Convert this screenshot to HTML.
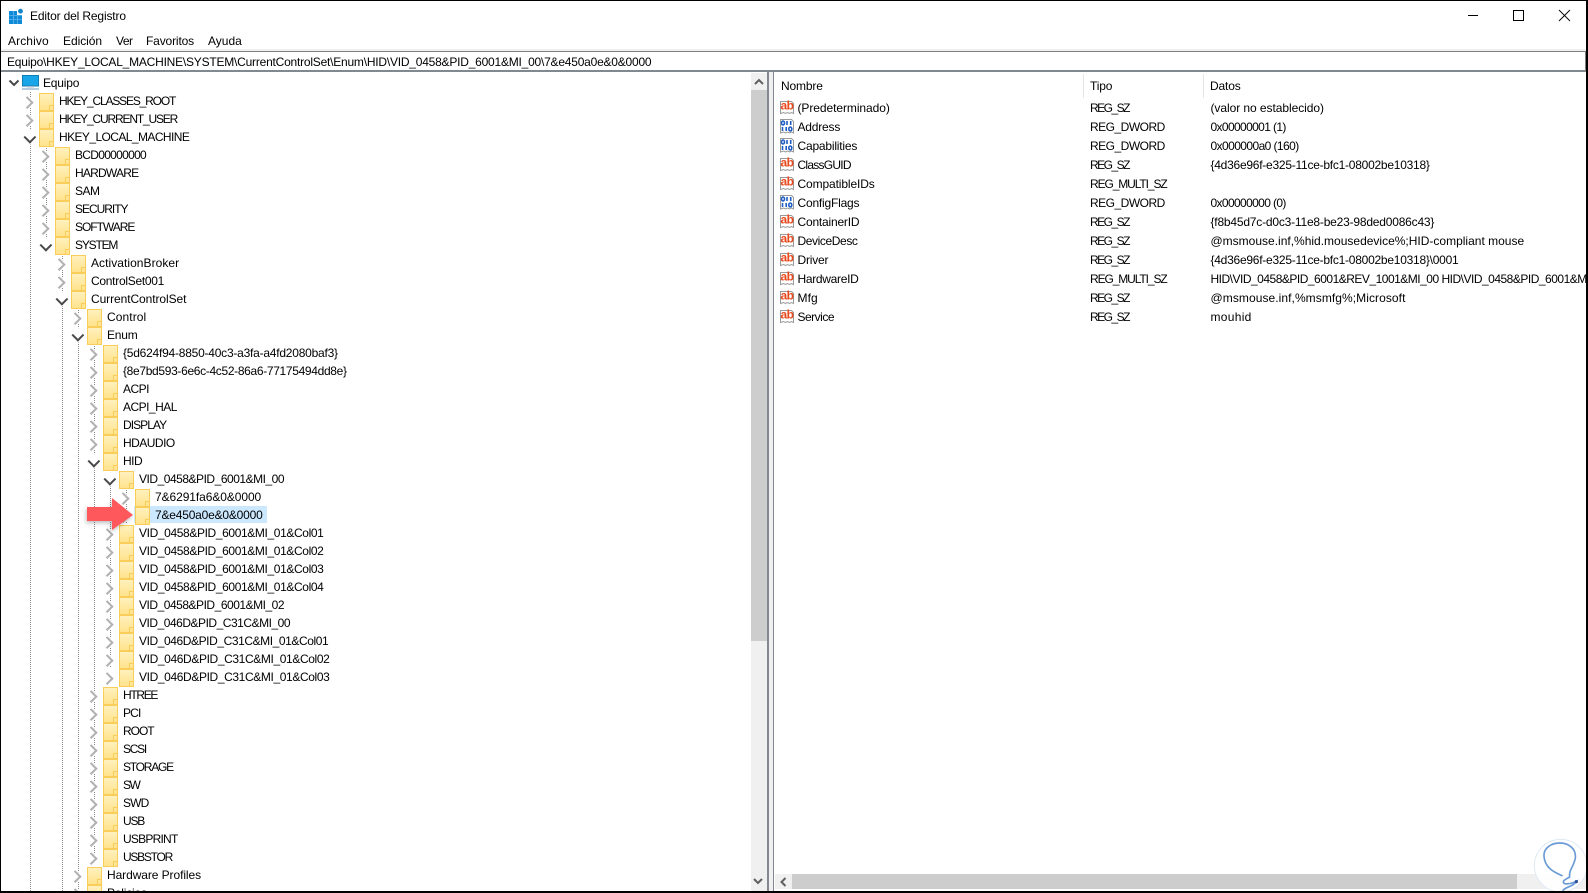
<!DOCTYPE html>
<html lang="es"><head><meta charset="utf-8"><title>Editor del Registro</title>
<style>
*{box-sizing:border-box}
html,body{margin:0;padding:0;width:1588px;height:893px;overflow:hidden;background:#fff;font:12px/18px "Liberation Sans",sans-serif;color:#000}
.a{position:absolute;white-space:nowrap}
.t{letter-spacing:-.15px}
#frame{position:absolute;left:0;top:0;width:1588px;height:893px;border:solid #000;border-width:1px 2px 2px 1px;pointer-events:none;z-index:9}
#tree{position:absolute;left:1px;top:74px;width:750px;height:817px;overflow:hidden}
.d{position:absolute;width:1px;background:repeating-linear-gradient(#8a8a8a 0 1px,transparent 1px 2px)}
.r{position:relative;height:18px;padding-left:calc(42px + 16px*var(--k));white-space:nowrap;letter-spacing:-.2px}
.u{letter-spacing:-.52px}
.r::before{content:"";position:absolute;left:calc(5.5px + 16px*var(--k));top:6px;width:6.5px;height:6.5px;border:solid #b0b0b0;border-width:2px 2px 0 0;transform:rotate(45deg);background:#fff;box-shadow:0 0 0 1px #fff}
.r.o::before{border-color:#484848;transform:rotate(135deg);top:4.5px;left:calc(8.5px + 16px*var(--k))}
.r::after{content:"";position:absolute;left:calc(22px + 16px*var(--k));top:1px;width:13px;height:16px;border:1px solid #f8cd5a;
background:linear-gradient(#f8cd5a,#f8cd5a) right 3px bottom 0/1px 5px no-repeat,linear-gradient(#f8cd5a,#f8cd5a) right 0 bottom 4px/3px 1px no-repeat,linear-gradient(#fff0bd,#ffe38c)}
.l1{--k:1}.l2{--k:2}.l3{--k:3}.l4{--k:4}.l5{--k:5}.l6{--k:6}.l7{--k:7}
#list{position:absolute;left:774px;top:99px;width:812px;height:300px;overflow:hidden}
.v{position:relative;height:19px;line-height:19px;white-space:nowrap;letter-spacing:-.2px}
.v span{position:absolute;top:0}
.v svg{position:absolute;left:5px;top:0}
.n{left:23.5px}.y{left:316px;letter-spacing:-.5px}.w{left:436.5px}
.z{letter-spacing:-1.5px}.m{letter-spacing:-1.1px}
.ab{font:700 12px "Liberation Sans",sans-serif;letter-spacing:-.6px;fill:#e8481c}
</style></head><body>
<svg width="0" height="0" style="position:absolute"><defs>
<symbol id="pg" viewBox="0 0 16 16"><path d="M1.5 2.5h11l2 2v10l-2-1-2 1-2-1-2 1-2-1-3 1z" fill="#fff" stroke="#9a9a9a"/></symbol>
<symbol id="bn" viewBox="0 0 16 16"><path d="M1.5 1.5h11l2 2v11.5l-2-1-2 1-2-1-2 1-2-1-3 1z" fill="#fff" stroke="#9a9a9a"/><g fill="none" stroke="#1d5cc4" stroke-width="1.6"><ellipse cx="4" cy="5" rx="1.5" ry="2"/><path d="M8 3v4M11.7 3v4M3.5 9v4M7.2 9v4"/><ellipse cx="11.3" cy="11" rx="1.5" ry="2"/></g></symbol>
</defs></svg>
<svg class="a" style="left:9px;top:8px" width="15" height="16" viewBox="0 0 15 16"><rect x="0" y="3" width="13" height="13" fill="#0f8ad8"/><path d="M0 7.5h13M0 11.5h13M4.5 3v13M8.5 3v13" stroke="#5fb4ea" stroke-width=".8"/><rect x="8" y="1" width="7" height="6" fill="#fff"/><circle cx="11.5" cy="3.2" r="2.4" fill="#1285c8"/></svg>
<div class="a t" style="left:30px;top:7px">Editor del Registro</div>
<svg class="a" style="left:1460px;top:4px" width="120" height="24" viewBox="0 0 120 24"><path d="M8 11.5h10" stroke="#000"/><rect x="53.5" y="6.5" width="10" height="10" fill="none" stroke="#000"/><path d="M99 6l11 11M110 6L99 17" stroke="#000" stroke-width=".9"/></svg>
<div class="a" style="left:8px;top:32px;letter-spacing:.1px">Archivo</div>
<div class="a" style="left:63px;top:32px;letter-spacing:-.05px">Edición</div>
<div class="a" style="left:116px;top:32px;letter-spacing:-.5px">Ver</div>
<div class="a t" style="left:146px;top:32px">Favoritos</div>
<div class="a" style="left:208px;top:32px;letter-spacing:0">Ayuda</div>
<div class="a" style="left:1px;top:49px;width:1585px;height:2px;background:#f0f0f0"></div>
<div class="a" style="left:1px;top:51px;width:1585px;height:21px;border-top:1px solid #808080;border-bottom:2px solid #808890;border-right:1px solid #808080"></div>
<div class="a" style="left:7px;top:53px;letter-spacing:-.22px">Equipo\HKEY_LOCAL_MACHINE\SYSTEM\CurrentControlSet\Enum\HID\VID_0458&amp;PID_6001&amp;MI_00\7&amp;e450a0e&amp;0&amp;0000</div>
<div class="a" style="left:134px;top:506px;width:133px;height:17px;background:#cce8ff"></div>
<div id="tree">
<div class="d" style="left:29px;top:18px;height:799px"></div>
<div class="d" style="left:45px;top:72px;height:100px"></div>
<div class="d" style="left:61px;top:180px;height:637px"></div>
<div class="d" style="left:77px;top:234px;height:583px"></div>
<div class="d" style="left:93px;top:270px;height:520px"></div>
<div class="d" style="left:109px;top:396px;height:198px"></div>
<div class="d" style="left:125px;top:414px;height:36px"></div>
<div style="position:relative;height:18px;padding-left:42px;letter-spacing:-.2px"><svg style="position:absolute;left:7px;top:5px" width="12" height="9" viewBox="0 0 12 9"><path d="M1.5 1.5l4.5 4.5 4.5-4.5" fill="none" stroke="#484848" stroke-width="2"/></svg><svg style="position:absolute;left:21px;top:1px" width="17" height="16" viewBox="0 0 17 16"><rect x=".5" y=".5" width="16" height="10.5" fill="#19a6e8" stroke="#0f7fb5"/><rect x="5" y="11" width="7" height="1.5" fill="#a8bccc"/><rect x="0" y="13" width="17" height="2" fill="#b8cce0"/></svg>Equipo</div>
<div class="r l1 u" style="letter-spacing:-1.17px">HKEY_CLASSES_ROOT</div>
<div class="r l1 u" style="letter-spacing:-1.17px">HKEY_CURRENT_USER</div>
<div class="r l1 u o" style="letter-spacing:-.58px">HKEY_LOCAL_MACHINE</div>
<div class="r l2 u" style="letter-spacing:-.7px">BCD00000000</div>
<div class="r l2 u" style="letter-spacing:-.77px">HARDWARE</div>
<div class="r l2 u">SAM</div>
<div class="r l2 u" style="letter-spacing:-1.02px">SECURITY</div>
<div class="r l2 u" style="letter-spacing:-1.02px">SOFTWARE</div>
<div class="r l2 u o" style="letter-spacing:-1.19px">SYSTEM</div>
<div class="r l3" style="letter-spacing:.05px">ActivationBroker</div>
<div class="r l3" style="letter-spacing:-.28px">ControlSet001</div>
<div class="r l3 o" style="letter-spacing:-.08px">CurrentControlSet</div>
<div class="r l4" style="letter-spacing:.09px">Control</div>
<div class="r l4 o">Enum</div>
<div class="r l5" style="letter-spacing:-.23px">{5d624f94-8850-40c3-a3fa-a4fd2080baf3}</div>
<div class="r l5" style="letter-spacing:-.33px">{8e7bd593-6e6c-4c52-86a6-77175494dd8e}</div>
<div class="r l5 u">ACPI</div>
<div class="r l5 u">ACPI_HAL</div>
<div class="r l5 u" style="letter-spacing:-.95px">DISPLAY</div>
<div class="r l5 u">HDAUDIO</div>
<div class="r l5 u o">HID</div>
<div class="r l6 u o" style="letter-spacing:-.48px">VID_0458&amp;PID_6001&amp;MI_00</div>
<div class="r l7" style="letter-spacing:-.08px">7&amp;6291fa6&amp;0&amp;0000</div>
<div class="r l7">7&amp;e450a0e&amp;0&amp;0000</div>
<div class="r l6 u" style="letter-spacing:-.38px">VID_0458&amp;PID_6001&amp;MI_01&amp;Col01</div>
<div class="r l6 u" style="letter-spacing:-.38px">VID_0458&amp;PID_6001&amp;MI_01&amp;Col02</div>
<div class="r l6 u" style="letter-spacing:-.38px">VID_0458&amp;PID_6001&amp;MI_01&amp;Col03</div>
<div class="r l6 u" style="letter-spacing:-.38px">VID_0458&amp;PID_6001&amp;MI_01&amp;Col04</div>
<div class="r l6 u" style="letter-spacing:-.48px">VID_0458&amp;PID_6001&amp;MI_02</div>
<div class="r l6 u" style="letter-spacing:-.48px">VID_046D&amp;PID_C31C&amp;MI_00</div>
<div class="r l6 u" style="letter-spacing:-.42px">VID_046D&amp;PID_C31C&amp;MI_01&amp;Col01</div>
<div class="r l6 u" style="letter-spacing:-.38px">VID_046D&amp;PID_C31C&amp;MI_01&amp;Col02</div>
<div class="r l6 u" style="letter-spacing:-.38px">VID_046D&amp;PID_C31C&amp;MI_01&amp;Col03</div>
<div class="r l5 u" style="letter-spacing:-1.32px">HTREE</div>
<div class="r l5 u" style="letter-spacing:-.85px">PCI</div>
<div class="r l5 u" style="letter-spacing:-1.02px">ROOT</div>
<div class="r l5 u" style="letter-spacing:-1.27px">SCSI</div>
<div class="r l5 u" style="letter-spacing:-1.22px">STORAGE</div>
<div class="r l5 u" style="letter-spacing:-1.5px">SW</div>
<div class="r l5 u" style="letter-spacing:-.85px">SWD</div>
<div class="r l5 u" style="letter-spacing:-1.2px">USB</div>
<div class="r l5 u" style="letter-spacing:-.77px">USBPRINT</div>
<div class="r l5 u" style="letter-spacing:-1.25px">USBSTOR</div>
<div class="r l4" style="letter-spacing:-.08px">Hardware Profiles</div>
<div class="r l4">Policies</div>
</div>
<svg class="a" style="left:87px;top:498px;filter:drop-shadow(-1px 2px 2px rgba(0,0,0,.25))" width="47" height="32" viewBox="0 0 47 32"><path d="M0 9h25V0l21 17-21 15V23H0z" fill="#ff585c"/></svg>
<div class="a" style="left:751px;top:73px;width:16px;height:818px;background:#f0f0f0"></div>
<div class="a" style="left:751px;top:90px;width:16px;height:551px;background:#cdcdcd"></div>
<svg class="a" style="left:753px;top:78px" width="12" height="8" viewBox="0 0 12 8"><path d="M2 6l4-4 4 4" fill="none" stroke="#606060" stroke-width="2"/></svg>
<svg class="a" style="left:752px;top:877px" width="12" height="8" viewBox="0 0 12 8"><path d="M2 2l4 4 4-4" fill="none" stroke="#606060" stroke-width="2"/></svg>
<div class="a" style="left:767px;top:72px;width:7px;height:819px;background:#f0f0f0;border-left:2px solid #828790;border-right:1px solid #828790"></div>
<div class="a t" style="left:781px;top:77px">Nombre</div>
<div class="a t" style="left:1090px;top:77px">Tipo</div>
<div class="a t" style="left:1210px;top:77px">Datos</div>
<div class="a" style="left:1083px;top:74px;width:1px;height:24px;background:#e5e5e5"></div>
<div class="a" style="left:1203px;top:74px;width:1px;height:24px;background:#e5e5e5"></div>
<div id="list">
<div class="v"><svg width="16" height="16"><use href="#pg"/><text class="ab" x="1.5" y="10.5">ab</text></svg><span class="n" style="letter-spacing:-.07px">(Predeterminado)</span><span class="y z">REG_SZ</span><span class="w" style="letter-spacing:-.06px">(valor no establecido)</span></div>
<div class="v"><svg width="16" height="16"><use href="#bn"/></svg><span class="n">Address</span><span class="y">REG_DWORD</span><span class="w" style="letter-spacing:-.63px">0x00000001 (1)</span></div>
<div class="v"><svg width="16" height="16"><use href="#bn"/></svg><span class="n">Capabilities</span><span class="y">REG_DWORD</span><span class="w" style="letter-spacing:-.58px">0x000000a0 (160)</span></div>
<div class="v"><svg width="16" height="16"><use href="#pg"/><text class="ab" x="1.5" y="10.5">ab</text></svg><span class="n" style="letter-spacing:-.75px">ClassGUID</span><span class="y z">REG_SZ</span><span class="w" style="letter-spacing:-.25px">{4d36e96f-e325-11ce-bfc1-08002be10318}</span></div>
<div class="v"><svg width="16" height="16"><use href="#pg"/><text class="ab" x="1.5" y="10.5">ab</text></svg><span class="n" style="letter-spacing:-.12px">CompatibleIDs</span><span class="y m">REG_MULTI_SZ</span></div>
<div class="v"><svg width="16" height="16"><use href="#bn"/></svg><span class="n">ConfigFlags</span><span class="y">REG_DWORD</span><span class="w" style="letter-spacing:-.63px">0x00000000 (0)</span></div>
<div class="v"><svg width="16" height="16"><use href="#pg"/><text class="ab" x="1.5" y="10.5">ab</text></svg><span class="n">ContainerID</span><span class="y z">REG_SZ</span><span class="w">{f8b45d7c-d0c3-11e8-be23-98ded0086c43}</span></div>
<div class="v"><svg width="16" height="16"><use href="#pg"/><text class="ab" x="1.5" y="10.5">ab</text></svg><span class="n" style="letter-spacing:-.4px">DeviceDesc</span><span class="y z">REG_SZ</span><span class="w" style="letter-spacing:0">@msmouse.inf,%hid.mousedevice%;HID-compliant mouse</span></div>
<div class="v"><svg width="16" height="16"><use href="#pg"/><text class="ab" x="1.5" y="10.5">ab</text></svg><span class="n">Driver</span><span class="y z">REG_SZ</span><span class="w" style="letter-spacing:-.25px">{4d36e96f-e325-11ce-bfc1-08002be10318}\0001</span></div>
<div class="v"><svg width="16" height="16"><use href="#pg"/><text class="ab" x="1.5" y="10.5">ab</text></svg><span class="n" style="letter-spacing:-.3px">HardwareID</span><span class="y m">REG_MULTI_SZ</span><span class="w" style="letter-spacing:-.5px">HID\VID_0458&amp;PID_6001&amp;REV_1001&amp;MI_00 HID\VID_0458&amp;PID_6001&amp;MI_00</span></div>
<div class="v"><svg width="16" height="16"><use href="#pg"/><text class="ab" x="1.5" y="10.5">ab</text></svg><span class="n" style="letter-spacing:.1px">Mfg</span><span class="y z">REG_SZ</span><span class="w" style="letter-spacing:.07px">@msmouse.inf,%msmfg%;Microsoft</span></div>
<div class="v"><svg width="16" height="16"><use href="#pg"/><text class="ab" x="1.5" y="10.5">ab</text></svg><span class="n" style="letter-spacing:-.5px">Service</span><span class="y z">REG_SZ</span><span class="w" style="letter-spacing:.3px">mouhid</span></div>
</div>
<div class="a" style="left:775px;top:874px;width:811px;height:15px;background:#f0f0f0"></div>
<div class="a" style="left:792px;top:874px;width:725px;height:15px;background:#cdcdcd"></div>
<svg class="a" style="left:779px;top:876px" width="9" height="12" viewBox="0 0 9 12"><path d="M6.5 2l-4 4 4 4" fill="none" stroke="#606060" stroke-width="2"/></svg>
<svg class="a" style="left:1448px;top:813px;z-index:8" width="140" height="80" viewBox="0 0 420 240"><circle cx="338" cy="158" r="79" fill="#fff" fill-opacity=".9" stroke="#dfe9f3" stroke-width="3"/><path d="M342 188C320 178 290 165 288 130 286 105 310 90 335 90 365 90 385 110 382 135 378 160 362 170 365 192 350 200 340 205 350 212 365 215 385 205 385 205 375 222 355 220 345 232" fill="none" stroke="#6b9bd6" stroke-width="5" stroke-linecap="round"/><circle cx="385" cy="206" r="5" fill="#2b4f9a"/></svg>
<div id="frame"></div>
</body></html>
